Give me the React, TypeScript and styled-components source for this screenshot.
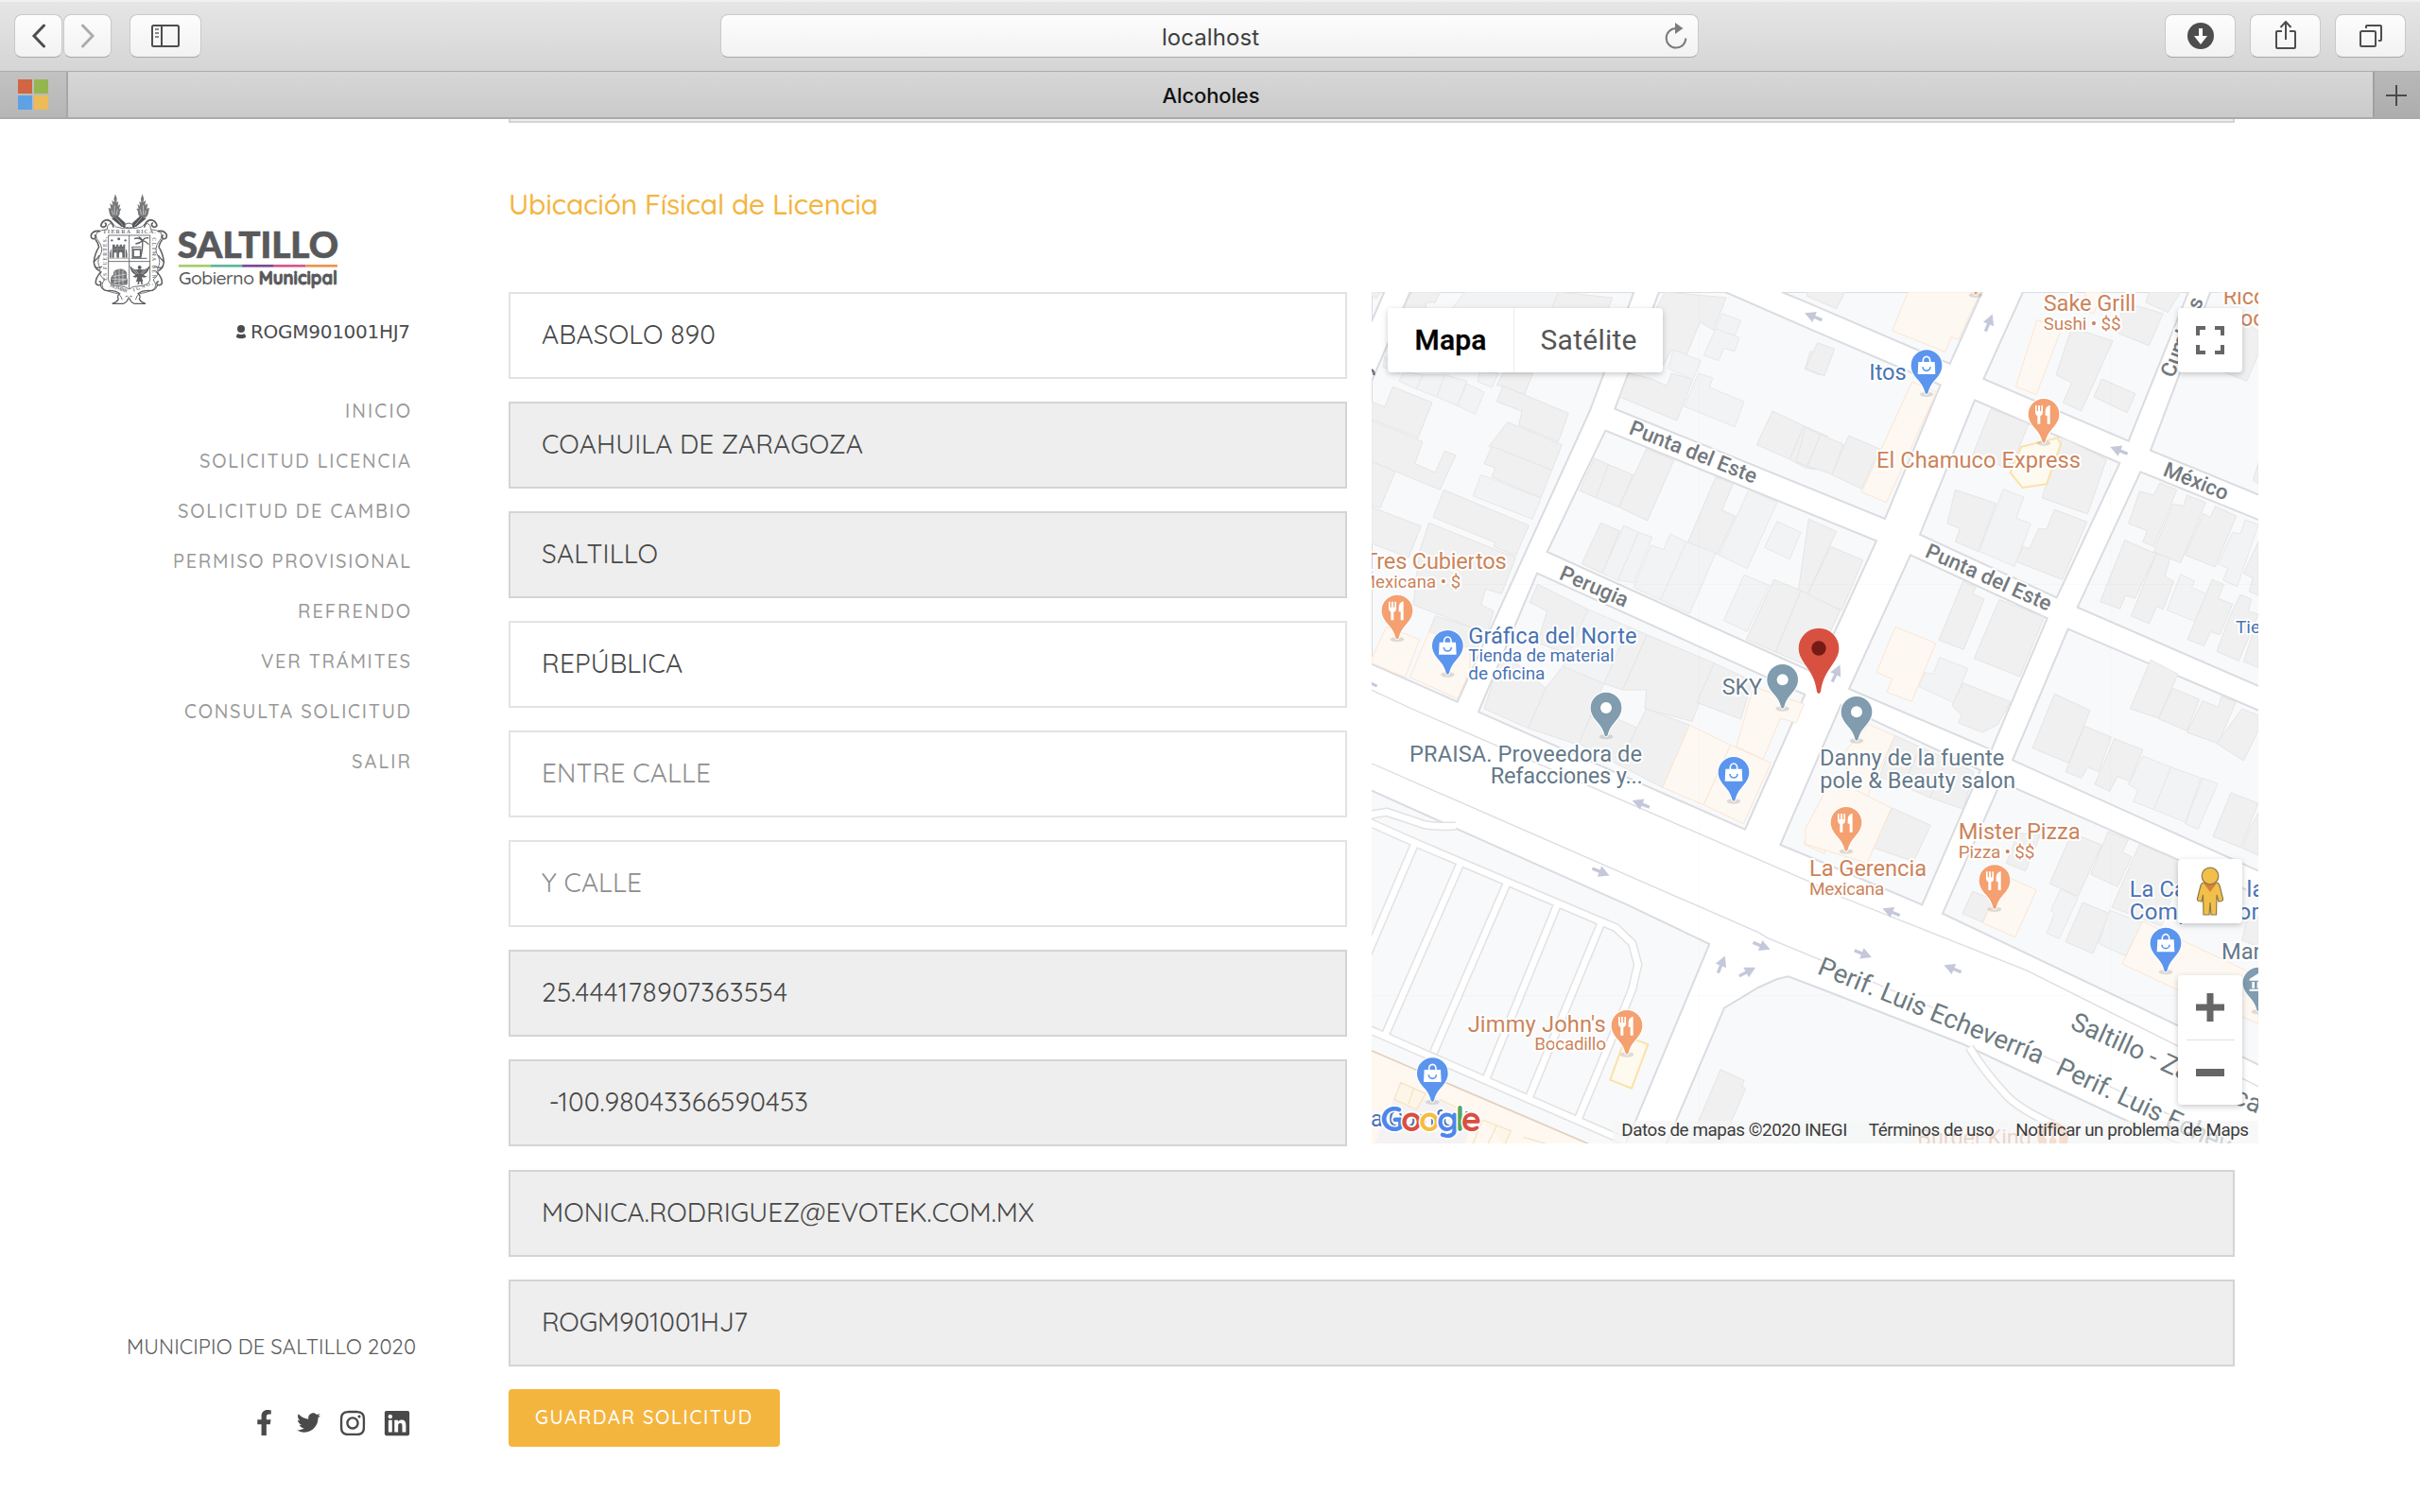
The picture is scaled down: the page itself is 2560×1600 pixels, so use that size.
import React, { useLayoutEffect, useRef, useState } from "react";
import styled, { createGlobalStyle, css } from "styled-components";
import { FaFacebookF, FaInstagram, FaLinkedin, FaTwitter } from "react-icons/fa";

const sans = `"Quicksand", Lato, "Open Sans", sans-serif`;
const mapFont = `Roboto, "Liberation Sans", sans-serif`;
const chromeFont = `Inter, "Liberation Sans", sans-serif`;

const GlobalStyle = createGlobalStyle`
  * { box-sizing: border-box; }
  body { margin: 0; background: #fff; font-family: ${sans}; }
`;

/* ---------- text with a fixed measure ---------- */

const Run = styled.span`
  display: inline-block;
  white-space: pre;
`;

function Measured({ text, width }: { text: string; width: number }) {
  const ref = useRef<HTMLSpanElement>(null);
  const [spacing, setSpacing] = useState(0);
  useLayoutEffect(() => {
    if (!ref.current) return;
    const natural = ref.current.getBoundingClientRect().width;
    setSpacing((width - natural) / (text.length - 1));
  }, [text, width]);
  return (
    <Run ref={ref} style={{ letterSpacing: spacing, marginRight: -spacing }}>
      {text}
    </Run>
  );
}

/* ---------- browser chrome ---------- */

const Window = styled.div`
  width: 2560px;
  height: 1600px;
  display: flex;
  flex-direction: column;
  overflow: hidden;
  background: #fff;
`;

const Toolbar = styled.header`
  flex: none;
  height: 76px;
  padding: 15px 15px 0;
  display: grid;
  grid-template-columns: 747px 1035px 1fr;
  align-items: start;
  background: linear-gradient(#e6e6e6, #d5d5d5);
  border-top: 0;
  border-bottom: 1px solid #acacac;
  box-shadow: inset 0 2px 0 #f1f1f1;
`;

const ButtonGroup = styled.div<{ $end?: boolean }>`
  display: flex;
  gap: ${(p) => (p.$end ? 15 : 1)}px;
  justify-content: ${(p) => (p.$end ? "flex-end" : "flex-start")};
`;

const ToolButton = styled.button<{ $width: number; $apart?: boolean }>`
  width: ${(p) => p.$width}px;
  height: 46px;
  margin: 0 0 0 ${(p) => (p.$apart ? 18 : 0)}px;
  padding: 0;
  border: 1px solid #c9c9c9;
  border-bottom-color: #a8a8a8;
  border-radius: 8px;
  background: linear-gradient(#fdfdfd, #f2f2f2);
  display: flex;
  align-items: center;
  justify-content: center;
  svg { display: block; }
`;

const AddressBar = styled.div`
  height: 46px;
  border: 1px solid #c9c9c9;
  border-bottom-color: #a8a8a8;
  border-radius: 8px;
  background: linear-gradient(#fdfdfd, #f2f2f2);
  display: grid;
  grid-template-columns: 1fr 120px 1fr;
  align-items: center;
  justify-items: center;
  font: 400 24px/30px ${chromeFont};
  color: #3f3f3f;
  padding: 1px 10px 0 12px;
  svg { grid-column: 3; justify-self: end; }
  span { grid-column: 2; padding-top: 2px; }
`;

const TabStrip = styled.div`
  flex: none;
  height: 50px;
  display: grid;
  grid-template-columns: 72px 1fr 50px;
  border-bottom: 2px solid #ababab;
`;

const PinnedTab = styled.div`
  background: linear-gradient(#c2c2c2, #b6b6b6);
  border-right: 2px solid #a7a7a7;
  display: flex;
  align-items: center;
  justify-content: center;
`;

const WindowsMark = styled.div`
  display: grid;
  grid-template-columns: 15px 15px;
  grid-auto-rows: 15px;
  gap: 2px;
`;

const Square = styled.i<{ $color: string }>`
  background: ${(p) => p.$color};
`;

const ActiveTab = styled.div`
  background: linear-gradient(#d7d7d7, #cacaca);
  display: flex;
  align-items: center;
  justify-content: center;
  font: 500 22px/28px ${chromeFont};
  color: #111;
  padding: 1px 20px 0 0;
`;

const NewTab = styled.div`
  background: linear-gradient(#b8b8b8, #adadad);
  border-left: 2px solid #a0a0a0;
  display: flex;
  align-items: center;
  justify-content: center;
  padding: 2px 2px 0 0;
`;

/* ---------- page ---------- */

const Page = styled.div`
  flex: 1;
  display: flex;
  min-height: 0;
`;

const Sidebar = styled.aside`
  width: 538px;
  padding: 77px 104px 79px 95px;
  display: flex;
  flex-direction: column;
`;

const User = styled.div`
  margin-top: 16px;
  height: 24px;
  display: flex;
  justify-content: flex-end;
  align-items: center;
  gap: 5px;
  font: 400 20px/24px "DejaVu Sans", sans-serif;
  color: #4c4c4c;
`;

const Menu = styled.nav`
  margin-top: 45px;
  display: flex;
  flex-direction: column;
  align-items: flex-end;
`;

const MenuItem = styled.a`
  height: 53px;
  font: 500 20px/53px ${sans};
  color: #999;
`;

const SideFooter = styled.footer`
  margin-top: auto;
  display: flex;
  flex-direction: column;
  align-items: flex-end;
`;

const Copyright = styled.div`
  height: 28px;
  margin-right: -6px;
  font: 400 22px/28px ${sans};
  color: #5c5c5c;
`;

const Social = styled.div`
  margin-top: 51px;
  height: 31px;
  display: grid;
  grid-template-columns: repeat(4, 46.7px);
  justify-items: center;
  align-items: center;
  margin-right: -9px;
  color: #4a4a4a;
`;

const Main = styled.main`
  width: 1851px;
  display: flex;
  flex-direction: column;
  align-items: flex-start;
`;

const CutField = styled.div`
  width: 1826px;
  height: 4px;
  background: #eee;
  border: solid #d4d4d4;
  border-width: 0 2px 2px;
`;

const Title = styled.h2`
  margin: 68px 0 75px;
  height: 36px;
  font: 500 30px/36px ${sans};
  color: #f4b53f;
`;

const Split = styled.div`
  display: flex;
  gap: 26px;
  margin-bottom: 25px;
`;

const FieldColumn = styled.div<{ $width: number }>`
  width: ${(p) => p.$width}px;
  display: flex;
  flex-direction: column;
  gap: 24px;
`;

const FieldBox = styled.div<{ $locked?: boolean; $empty?: boolean }>`
  height: 92px;
  padding: 0 33px 2px;
  display: flex;
  align-items: center;
  font: 400 28px/34px ${sans};
  background: #fff;
  border: 2px solid #e3e3e3;
  color: ${(p) => (p.$empty ? "#8e8e8e" : "#484848")};
  ${(p) =>
    p.$locked &&
    css`
      background: #eee;
      border-color: #d4d4d4;
    `}
`;

const Submit = styled.button`
  margin-top: 24px;
  width: 287px;
  height: 61px;
  border: 0;
  padding: 0 2px 1px 0;
  border-radius: 4px;
  background: #f4b53f;
  color: #fff;
  font: 500 20px/28px ${sans};
`;

/* ---------- map ---------- */

const MapFrame = styled.section`
  position: relative;
  width: 938px;
  height: 901px;
  overflow: hidden;
  font-family: ${mapFont};
  > svg { display: block; }
`;

const Control = styled.div<{ $top: number; $height: number }>`
  position: absolute;
  right: 17px;
  top: ${(p) => p.$top}px;
  width: 68px;
  height: ${(p) => p.$height}px;
  background: #fff;
  border-radius: 4px;
  box-shadow: 0 2px 6px rgba(0, 0, 0, 0.22);
  display: flex;
  flex-direction: column;
  align-items: center;
  justify-content: center;
`;

const ZoomHalf = styled.div`
  flex: 1;
  width: 51px;
  display: flex;
  align-items: center;
  justify-content: center;
  & + & { border-top: 1px solid #e0e0e0; }
`;

const TypeSwitch = styled.div`
  position: absolute;
  left: 17px;
  top: 17px;
  height: 68px;
  display: grid;
  grid-template-columns: 133px 158px;
  background: #fff;
  border-radius: 4px;
  box-shadow: 0 2px 6px rgba(0, 0, 0, 0.22);
`;

const TypeOption = styled.div<{ $active?: boolean }>`
  display: flex;
  align-items: center;
  justify-content: center;
  font-size: 30px;
  line-height: 36px;
  padding-bottom: 1px;
  font-weight: ${(p) => (p.$active ? 500 : 400)};
  color: ${(p) => (p.$active ? "#000" : "#565656")};
  -webkit-text-stroke: ${(p) => (p.$active ? "0.4px #000" : "0")};
  & + & { border-left: 1px solid #ececec; }
`;

const Attribution = styled.div`
  position: absolute;
  right: 0;
  bottom: 0;
  height: 24px;
  padding: 0 10px 4px 9px;
  display: flex;
  align-items: center;
  gap: 22.5px;
  background: rgba(245, 245, 245, 0.72);
  font-size: 18.8px;
  line-height: 20px;
  color: #3c3c3c;
`;

const Label = styled.text<{ $size: number; $fill: string; $weight?: number }>`
  font-family: ${mapFont};
  font-size: ${(p) => p.$size}px;
  font-weight: ${(p) => p.$weight ?? 400};
  fill: ${(p) => p.$fill};
  stroke: #fff;
  stroke-width: 12px;
  stroke-linejoin: round;
  paint-order: stroke;
`;

/* Map geometry: one unit is a third of a pixel. East half starts at x=1410, south half at y=1350. */

const blocks = [
  "33,27 73,27 33,120",
  "155,27 865,27 770,285 725,405 305,1328 33,1208 33,310",
  "945,27 1155,27 1440,152 1838,322 1662,747 805,398",
  "1335,27 1410,58 1868,255 1970,27",
  "2100,27 1975,303 2435,500 2625,27",
  "2695,27 2505,530 2857,674 2857,20",
  "1947,370 2407,570 2207,997 1773,797",
  "2473,598 2857,754 2857,1282 2273,1028",
  "775,467 1635,817 1442,1238 590,852",
  "1743,862 2177,1063 2000,1480 1548,1287",
  "2243,1097 2857,1359 2857,1869 2067,1513",
  "1522,1338 1965,1545 1780,1972 1410,1815 1330,1782",
  "2030,1582 2857,1946 2857,2485 2590,2355 1845,2000",
  "558,920 1408,1305 1218,1733 372,1360",
  "20,1604 300,1730 850,1975 1105,2097 870,2660 830,2750 20,2750",
  "1355,2200 1320,2208 1260,2235 1152,2300 960,2750 2640,2750 2390,2640 1910,2415 1440,2232",
];

type Zone = { x: number; y: number; grey: string[]; pale: string[]; warm: string[] };

const zones: Zone[] = [
  {
    x: 0,
    y: 0,
    grey: [
      "160,27 250,27 235,60 208,60 200,90 130,90",
      "33,27 60,27 48,48 33,40",
      "625,27 797,45 780,90 600,90",
      "965,27 1158,45 1118,148 1075,122 1033,225 985,210 955,265 930,90",
      "850,285 915,300 970,325 985,285 1052,305 1002,435 820,360",
      "1305,405 1405,452 1360,558 1255,512",
      "1405,452 1480,485 1440,590 1410,585 1360,558",
      "1425,215 1470,235 1455,290 1408,272",
      "100,328 225,378 180,490 33,430 33,375 75,392",
      "33,435 195,502 170,572 235,600 265,532 300,545 250,655 33,565",
      "33,565 108,597 60,712 33,705",
      "33,710 190,770 150,870 33,825",
      "262,655 532,768 490,865 420,835 425,822 228,742",
      "215,760 490,870 445,985 395,970 380,1020 420,1040 400,1110 165,1020 185,850",
      "235,1055 405,1110 350,1180 215,1105",
      "450,285 545,285 518,352 430,322",
      "450,325 658,412 625,502 500,450 510,405 430,375",
      "465,440 637,512 605,592 405,517",
      "415,517 605,592 570,680 415,615 425,585 390,572",
      "740,555 785,575 745,680 693,658",
      "785,575 862,607 818,710 745,680",
      "905,525 992,562 908,753 818,710",
      "760,760 820,785 765,920 700,890",
      "1125,615 1180,635 1145,720 1187,738 1130,860 1037,820",
      "1420,748 1508,787 1410,1000 1385,990",
      "1490,835 1592,878 1525,1037 1415,990",
      "1310,940 1395,975 1315,1170 1222,1130",
      "1395,975 1520,1037 1435,1222 1315,1170",
      "560,955 720,1035 660,1180 560,1140 590,1040 535,1012",
      "450,1170 585,1285 530,1412 390,1350",
      "585,1285 640,1215 770,1270 690,1465 530,1412",
      "850,1090 907,1115 830,1290 770,1270",
      "907,1115 1120,1205 1050,1390 900,1350 905,1290 830,1290",
      "1120,1205 1240,1262 1205,1383 1065,1330",
    ],
    pale: [
      "330,27 625,27 600,90 280,90",
      "75,230 120,285 70,265",
      "135,280 195,290 175,335 120,310",
      "195,290 265,290 240,360 175,335",
      "265,290 335,310 305,388 240,360",
      "335,318 390,345 362,415 305,388",
      "375,280 435,285 415,330 370,312",
      "1145,95 1205,118 1185,165 1125,145",
      "1125,143 1200,172 1185,215 1150,205 1135,245 1087,228",
      "990,210 1078,245 1052,305 975,270",
      "1070,285 1115,300 1105,330 1215,375 1185,455 1025,390",
      "380,607 570,682 543,748 355,675",
      "833,768 880,790 815,942 765,920",
      "880,790 923,805 865,950 815,942",
      "920,830 960,845 980,795 1032,820 950,1005 865,965",
      "1032,820 1125,855 1042,1048 950,1005",
      "1230,655 1320,695 1225,905 1135,862",
      "1320,755 1395,790 1360,875 1280,838",
      "1215,925 1295,958 1225,1105 1150,1070",
      "720,1035 850,1090 770,1270 640,1215",
    ],
    warm: ["80,1090 185,1130 140,1250 33,1205 33,1190", "215,1105 345,1160 345,1230 305,1318 155,1250"],
  },
  {
    x: 1410,
    y: 0,
    grey: [
      "5,27 125,27 98,80 5,40",
      "38,188 92,208 60,293 0,270",
      "845,140 975,182 875,405 817,378 845,315 795,290",
      "940,303 1047,350 1020,410 915,360",
      "1010,60 1135,95 1090,197 985,155",
      "1090,27 1190,27 1150,92 1080,60",
      "1390,120 1437,150 1437,225 1400,310 1325,280",
      "1437,570 1437,635 1420,625",
      "0,458 48,480 5,580 -30,565",
      "48,480 120,510 85,605 5,580",
      "137,483 235,525 178,652 83,607",
      "588,398 708,445 650,590 530,545",
      "815,490 955,558 895,732 750,680",
      "475,655 605,698 548,850 475,820 490,778 450,762",
      "790,717 893,757 815,940 668,883 690,835 710,842 740,778 765,780",
      "1125,633 1178,655 1105,835 1070,820 1085,785 1025,762 1060,660 1105,672",
      "1210,672 1270,695 1190,887 1105,852 1165,700 1200,707",
      "1300,707 1367,738 1300,900 1205,862 1262,730 1285,742",
      "1437,820 1437,990 1408,978 1420,935 1390,920",
      "1013,815 1113,858 1045,1000 1015,990 998,1033 935,1010",
      "1113,858 1157,872 1140,930 1168,945 1135,1035 1115,1025 1090,1080 1033,1055",
      "1290,940 1327,955 1310,1000 1355,1018 1315,1115 1285,1105 1265,1150 1212,1130 1250,1040",
      "1380,988 1415,1002 1405,1040 1437,1050 1375,1198 1305,1168 1345,1060",
      "1420,1110 1437,1115 1437,1220 1390,1200",
      "500,945 540,965 530,985 567,1002 502,1162 423,1132",
      "615,1003 757,1060 680,1248 535,1190",
      "500,1268 650,1328 610,1400 562,1425 485,1395 495,1370 465,1340",
      "1095,1195 1182,1240 1120,1380 1030,1350",
      "1165,1285 1250,1320 1210,1420 1120,1382",
      "1260,1325 1310,1345 1320,1310 1365,1330 1310,1460 1210,1425",
      "790,1303 903,1355 835,1522 720,1475",
      "1385,1350 1437,1370 1437,1420 1390,1515 1305,1460",
    ],
    pale: [
      "628,653 693,678 668,745 715,762 663,898 550,850",
      "1395,750 1437,765 1370,962 1325,942 1340,905 1310,890 1355,790 1380,795",
      "1190,923 1235,945 1225,965 1272,985 1235,1072 1147,1037",
      "425,1187 515,1222 470,1330 360,1280 378,1235 405,1240",
    ],
    warm: [
      "325,27 555,27 485,178 463,170 443,217 275,150",
      "338,312 415,345 257,695 178,662",
      "735,115 810,150 732,353 667,327",
      "890,27 940,27 915,97 880,80",
      "285,1090 413,1142 337,1327 258,1297 275,1255 225,1235",
    ],
  },
  {
    x: 0,
    y: 1350,
    grey: [
      "740,0 875,60 820,180 690,110",
      "905,0 1042,52 957,250 820,180 875,60",
      "1140,1145 1215,1180 1208,1200 1220,1205 1145,1380 1040,1380",
    ],
    pale: [],
    warm: [
      "1042,52 1172,115 1087,305 957,250",
      "1172,115 1300,172 1213,365 1087,305",
      "1245,-70 1405,-15 1380,45 1330,30 1275,160 1190,120",
      "1440,350 1480,360 1470,460 1405,430",
    ],
  },
  {
    x: 1410,
    y: 1350,
    grey: [
      "283,85 365,122 310,245 235,215",
      "365,122 450,160 395,282 310,245",
      "450,160 535,200 500,318 395,282",
      "275,315 397,370 343,485 213,440",
      "675,395 745,400 698,515 637,490",
      "530,580 595,605 562,678 498,650",
      "885,55 970,90 930,200 895,185 875,220 825,200",
      "980,95 1070,130 1030,230 990,215 965,262 918,240",
      "1350,267 1437,300 1380,440 1293,405",
      "1437,330 1437,465 1385,442 1410,380",
      "845,395 940,432 865,595 775,555",
      "960,390 1025,415 1005,455 1035,470 990,565 905,525",
      "1060,430 1200,490 1130,690 972,630",
      "880,615 965,650 912,777 825,740",
      "1400,670 1437,660 1437,755 1385,735",
    ],
    pale: [
      "1070,150 1160,185 1105,320 1040,295 1055,258 1025,240",
      "1160,185 1255,220 1205,360 1105,320",
      "1260,220 1308,238 1245,383 1205,365",
      "810,572 865,600 805,730 765,712 790,650 778,640",
      "965,640 1070,680 1015,785 930,745",
    ],
    warm: [
      "200,50 283,85 195,280 130,250 130,130",
      "85,220 272,315 195,490 0,430 0,380",
      "630,530 733,575 665,725 562,680",
      "1070,675 1437,850 1437,1000 1182,893 1005,810",
    ],
  },
];

const arrows: [number, number, number][] = [
  [1435, 105, 202],
  [1992, 125, -68],
  [2405, 530, 202],
  [1507, 1238, -65],
  [888, 1652, 202],
  [760, 1868, 22],
  [1270, 2103, 22],
  [1143, 2162, -68],
  [1225, 2185, -28],
  [1682, 1995, 202],
  [1592, 2128, 22],
  [1877, 2175, 202],
];

type PinKind = "food" | "shop" | "place" | "bank";
const pinColor: Record<PinKind, string> = { food: "#f4a070", shop: "#5b95ee", place: "#809cae", bank: "#809cae" };

const pins: [PinKind, number, number][] = [
  ["food", 114, 1038],
  ["shop", 274, 1150],
  ["place", 1337, 1258],
  ["place", 777, 1347],
  ["shop", 1794, 260],
  ["food", 2166, 415],
  ["place", 1572, 1360],
  ["shop", 1182, 1552],
  ["food", 843, 2356],
  ["shop", 226, 2507],
  ["food", 1539, 1711],
  ["food", 2010, 1895],
  ["shop", 2553, 2094],
  ["bank", 2847, 2220],
  ["food", 2195, 2710],
  ["food", 1950, -55],
];

function Pin({ kind, x, y }: { kind: PinKind; x: number; y: number }) {
  return (
    <g transform={`translate(${x} ${y})`}>
      <ellipse cx="0" cy="92" rx="22" ry="8" fill="#000" opacity=".12" />
      <path
        d="M0-49A49 49 0 0 1 49 0C49 20 38 33 26 47C14 61 8 72 5 86Q0 96-5 86C-8 72-14 61-26 47C-38 33-49 20-49 0A49 49 0 0 1 0-49Z"
        fill={pinColor[kind]}
        stroke="#fff"
        strokeWidth="6"
        paintOrder="stroke"
      />
      {kind === "place" && <circle r="18" fill="#fff" />}
      {kind === "food" && (
        <g fill="#fff">
          <path d="M-27-28h5v18h4v-18h6v18h4v-18h5v22q0 9-8 11v26h-9V5q-7-2-7-11z" />
          <path d="M20-29v60h-9V4H5v-14q1-17 15-19z" />
        </g>
      )}
      {kind === "shop" && (
        <g>
          <path d="M-26-11h52l2 39h-56z" fill="#fff" />
          <path d="M-11-9v-6a11 13 0 0 1 22 0v6" fill="none" stroke="#fff" strokeWidth="5" />
          <path d="M-12 5a12 12 0 0 0 24 0" fill="none" stroke="#5b95ee" strokeWidth="5" />
        </g>
      )}
      {kind === "bank" && <path d="M-28-12L0-30L28-12v5h-56zM-20-3h8v20h-8zM-4-3h8v20h-8zM-28 20h56v6h-56z" fill="#fff" />}
    </g>
  );
}

const orange = "#cc835a";
const blue = "#4a73b3";
const slate = "#64798a";
const road = "#74797e";
const highway = "#6c7a80";

type LabelRow = [string, number, number, number | null, number, string, number?, number?];

/* text, x, baseline, length, size, colour, angle, weight */
const labels: LabelRow[] = [
  ["Tres Cubiertos", 10, 907, 451, 71, orange],
  ["Mexicana • $", -4, 966, 320, 56, orange],
  ["Gráfica del Norte", 340, 1143, 535, 71, blue],
  ["Tienda de material", 340, 1201, 463, 57, blue],
  ["de oficina", 340, 1257, 243, 57, blue],
  ["SKY", 1145, 1304, 127, 70, slate],
  ["Punta del Este", 846, 476, 430, 67, road, 21.8, 500],
  ["Perugia", 625, 937, 230, 67, road, 23.5, 500],
  ["Itos", 1612, 306, 118, 71, blue],
  ["El Chamuco Express", 1635, 585, 648, 71, orange],
  ["Sake Grill", 2165, 87, 293, 71, orange],
  ["Sushi • $$", 2165, 147, 246, 57, orange],
  ["Rico", 2735, 65, null, 70, orange],
  ["Food", 2752, 135, null, 70, orange],
  ["México", 2541, 608, 216, 67, road, 22, 500],
  ["Punta del Este", 1786, 866, 430, 67, road, 24, 500],
  ["Cumbres", 2578, 302, 266, 67, road, -69, 500],
  ["Tienda", 2775, 1110, null, 57, blue],
  ["PRAISA. Proveedora de", 153, 1517, 738, 71, slate],
  ["Refacciones y...", 410, 1588, 483, 71, slate],
  ["Jimmy John's", 338, 2376, 438, 71, orange],
  ["Bocadillo", 550, 2434, 227, 57, orange],
  ["La Gerencia", 1422, 1880, 372, 71, orange],
  ["Mexicana", 1422, 1941, 238, 57, orange],
  ["Mister Pizza", 1895, 1764, 387, 71, orange],
  ["Pizza • $$", 1895, 1823, 242, 57, orange],
  ["Danny de la fuente", 1455, 1530, 586, 71, slate],
  ["pole & Beauty salon", 1456, 1601, 620, 71, slate],
  ["La Casa de la", 2438, 1948, 428, 71, blue],
  ["Computadora", 2438, 2018, 450, 72, blue],
  ["Mart", 2730, 2145, null, 71, slate],
  ["Perif. Luis Echeverría", 1444, 2190, 766, 83, highway, 22.2],
  ["Perif. Luis Echeverría", 2200, 2508, 766, 83, highway, 25.2],
  ["Saltillo - Zacatecas", 2246, 2364, 700, 83, highway, 24.5],
  ["La Comfort", -8, 2675, 355, 70, blue],
  ["Burger King", 1765, 2735, 362, 71, orange],
];

const aisles = [
  "M20 1708L170 1775L760 2025L808 2045L860 2095L878 2162L860 2240L840 2290L685 2660",
  "M170 1778L-10 2200",
  "M315 1840L75 2388",
  "M463 1902L230 2440",
  "M625 1965L395 2528",
  "M762 2028L530 2590",
  "M20 2366L75 2390L840 2724",
  "M20 1688L82 1678L200 1718Q250 1726 300 1722",
];

function StreetMap() {
  return (
    <svg width="938" height="901" viewBox="33 27 2814 2703">
      <rect x="33" y="27" width="2814" height="2703" fill="#fff" />
      {blocks.map((p) => (
        <polygon key={p} points={p} fill="#f8f9fb" stroke="#dadce0" strokeWidth="6" />
      ))}
      <polygon points="20,2430 730,2735 20,2750" fill="#fef8f1" />
      <polygon points="100,2590 250,2590 350,2660 330,2735 40,2735" fill="#f5f2f4" />
      <path d="M20 2430L730 2735" stroke="#e2cfbd" strokeWidth="5" />
      <path
        d="M125 2537L205 2572L175 2622L105 2590ZM167 2555L150 2605M250 2590L350 2640M385 2655L475 2690L455 2735M385 2655L355 2730M430 2672L400 2735M515 2710L600 2735"
        fill="#fdf6e8"
        stroke="#f6e3c4"
        strokeWidth="4"
      />
      {[
        ["#e2e2e2", 29],
        ["#fff", 20],
      ].map(([color, width]) => (
        <g key={color} fill="none" stroke={color} strokeWidth={width} strokeLinejoin="round">
          {aisles.map((d) => (
            <path key={d} d={d} />
          ))}
          <path d="M1930 2425Q1975 2500 2050 2580Q2100 2630 2240 2690" />
        </g>
      ))}
      <path
        d="M20 1285L160 1350L1420 1898L1530 1950L2110 2180L2590 2420L2860 2556M20 1518L1260 2060L1290 2078L1440 2140L1770 2280L2250 2490L2760 2730"
        fill="none"
        stroke="#dcdce2"
        strokeWidth="4"
      />
      {zones.map((z) => (
        <g key={`${z.x}-${z.y}`} transform={`translate(${z.x} ${z.y})`} strokeWidth="3">
          {z.grey.map((p) => (
            <polygon key={p} points={p} fill="#f0f0f0" stroke="#e5e5e5" />
          ))}
          {z.pale.map((p) => (
            <polygon key={p} points={p} fill="#f1f3f5" stroke="#e6e8eb" />
          ))}
          {z.warm.map((p) => (
            <polygon key={p} points={p} fill="#fef8f2" stroke="#fae6d3" />
          ))}
        </g>
      ))}
      <g fill="#fffaf0" stroke="#fae2a8" strokeWidth="6">
        <polygon points="2095,518 2210,490 2220,510 2175,637 2098,648 2060,600" />
        <polygon points="840,2390 910,2415 858,2555 790,2528" />
      </g>
      <path d="M1073 27V2730M2377 27V2730M33 955H2847M33 2260H2847" stroke="#000" strokeOpacity=".03" strokeWidth="2" />
      {arrows.map(([x, y, a]) => (
        <path key={`${x},${y}`} transform={`translate(${x} ${y}) rotate(${a})`} d="M-29-5H-4V-18L30 0L-4 18V5H-29Z" fill="#c5c8da" />
      ))}
      <path d="M33 1265L52 1274L48 1282L33 1275Z" fill="#c5c8da" />
      <path d="M30 273q12 4 10 18" stroke={road} strokeWidth="8" fill="none" />
      {labels.map(([text, x, y, len, size, fill, angle, weight]) => (
        <Label
          key={`${text}${x}`}
          transform={`translate(${x} ${y}) rotate(${angle ?? 0})`}
          textLength={len ?? undefined}
          $size={size}
          $fill={fill}
          $weight={weight}
        >
          {text}
        </Label>
      ))}
      {pins.map(([kind, x, y]) => (
        <Pin key={`${x},${y}`} kind={kind} x={x} y={y} />
      ))}
      <g transform="translate(1452 1158)">
        <path
          d="M0-64A64 64 0 0 1 64 0C64 24 50 42 36 62C18 88 10 108 6 138Q0 150-6 138C-10 108-18 88-36 62C-50 42-64 24-64 0A64 64 0 0 1 0-64Z"
          fill="#d85140"
          stroke="#fff"
          strokeOpacity=".6"
          strokeWidth="4"
          paintOrder="stroke"
        />
        <circle r="23" fill="#731b14" />
      </g>
      <text
        x="61"
        y="2690"
        textLength="320"
        fontFamily="Quicksand, Lato, sans-serif"
        fontSize="108"
        fontWeight="700"
        stroke="#fff"
        strokeWidth="10"
        strokeLinejoin="round"
        paintOrder="stroke"
      >
        <tspan fill="#4e86ec">G</tspan>
        <tspan fill="#da4f40">o</tspan>
        <tspan fill="#f3bd42">o</tspan>
        <tspan fill="#4e86ec">g</tspan>
        <tspan fill="#58a65c">l</tspan>
        <tspan fill="#da4f40">e</tspan>
      </text>
    </svg>
  );
}

/* ---------- brand ---------- */

function Torch() {
  return (
    <g>
      <path
        d="M126 46L121 62L124 72L115 66L118 82L109 76L112 92L104 90L107 106Q108 116 117 122L130 120Q142 114 140 102L145 92L138 92L142 78L134 84L136 68L130 74L131 60Z"
        fill="#77787a"
      />
      <path d="M124 82Q122 98 124 112M115 98L119 112M133 94L130 112" stroke="#fff" strokeWidth="1.6" fill="none" />
      <path d="M114 124L134 116L158 138L158 150L146 150Z" fill="#55565a" />
      <path d="M128 120L150 146" stroke="#fff" strokeWidth="1.4" />
    </g>
  );
}

function Frame() {
  return (
    <g fill="none" stroke="#5c5d60" strokeWidth="2.6">
      <path d="M168 152Q148 158 128 150Q120 138 108 140Q98 146 100 158Q80 160 68 168Q60 182 72 194Q92 220 76 244Q66 262 78 282Q72 304 92 318Q76 336 92 350Q116 360 134 362Q144 366 148 382" />
      <path d="M120 152Q118 132 100 128Q84 130 80 146Q88 156 96 146Q98 138 92 138" strokeWidth="5" />
      <path d="M78 164Q56 160 49 176Q48 190 60 188Q68 180 60 176" strokeWidth="5" />
      <path d="M62 190Q72 200 74 214Q60 236 58 262Q60 282 76 290" strokeWidth="4.5" />
      <path d="M57 262Q70 250 76 240M60 276Q70 284 84 276" strokeWidth="4" />
      <path d="M82 292Q62 312 64 330Q72 340 80 332Q82 322 74 324" strokeWidth="4.5" />
      <path d="M78 334Q86 356 104 352M104 352Q128 352 140 362Q130 368 136 380Q130 390 116 394H152Q164 388 168 376" strokeWidth="3.6" />
      <path d="M158 372Q164 366 168 374" />
    </g>
  );
}

function Crest() {
  return (
    <g>
      <Torch />
      <g transform="translate(338 0) scale(-1 1)">
        <Torch />
      </g>
      <path d="M158 142Q169 134 180 142M150 150Q169 160 188 150" stroke="#5c5d60" strokeWidth="3" fill="none" />
      <Frame />
      <g transform="translate(338 0) scale(-1 1)">
        <Frame />
      </g>
      <path
        d="M104 177H236V318Q232 338 200 338Q180 338 170 348Q158 338 138 338Q106 338 104 318Z"
        fill="#fff"
        stroke="#5c5d60"
        strokeWidth="2.6"
      />
      <path d="M170 177V346M104 260H236" stroke="#5c5d60" strokeWidth="2.6" />
      {/* castle */}
      <g fill="#6a6b6d">
        <path d="M117 206h8v6h4v-6h7v6h4v-6h7v6h4v-6h6v42h-9v-14q-5-8-10 0v14h-8v-14q-4-6-8 0v14h-7z" />
        <circle cx="115" cy="193" r="3.5" />
        <circle cx="137" cy="188" r="4.5" />
        <circle cx="158" cy="193" r="3.5" />
        <path d="M108 248q-1-20 5-28v28zM164 248q1-20-5-28v28z" />
      </g>
      <path d="M106 250H168M120 220H156M132 210V246" stroke="#8b8c8e" strokeWidth="2" />
      {/* palm and well */}
      <g stroke="#606164" strokeWidth="3" fill="none">
        <path d="M186 188Q200 182 212 194Q220 182 232 186M212 194Q204 202 190 204M212 194Q224 196 232 206M212 194Q208 184 200 182" strokeWidth="4" />
        <path d="M212 194Q214 222 206 246" strokeWidth="4" />
        <rect x="183" y="222" width="23" height="24" strokeWidth="5" />
        <path d="M178 214H208M180 214V248M176 250H226" />
      </g>
      {/* lion */}
      <path d="M112 330Q108 306 120 302Q118 288 132 286Q146 280 156 288Q166 294 162 308Q168 322 164 334Q140 338 112 330Z" fill="#77787a" />
      <path d="M118 308L160 300M116 316H162M120 326L160 318M126 292V330M138 286V334M150 288V332" stroke="#fff" strokeWidth="1.6" />
      {/* eagle */}
      <g fill="#606164">
        <path d="M203 284Q184 290 172 272Q174 296 190 302Q184 308 180 306Q186 314 196 310L192 324H214L210 310Q222 314 228 306Q222 308 216 302Q232 296 236 272Q222 290 203 284Z" />
        <circle cx="203" cy="279" r="6" />
        <path d="M198 322h4v10h-6zM206 322h4l4 10h-6z" />
      </g>
      <path d="M180 284L194 300M188 286L200 300M226 284L212 300M218 286L206 300" stroke="#fff" strokeWidth="1.4" />
      <g fontFamily="Liberation Serif, serif" fontSize="18" fontWeight="700" fill="#77787a">
        <text x="86" y="172" textLength="88">TIERRA</text>
        <text x="192" y="172" textLength="62">RICA.</text>
        <text transform="translate(98 320) rotate(-90)" textLength="138" fontSize="16">ES FUERTES,</text>
        <text transform="translate(243 184) rotate(90)" textLength="140" fontSize="16">CLIMA BEN-</text>
        <text transform="translate(108 340) rotate(20)" textLength="58" fontSize="16">HOMBR</text>
        <text transform="translate(184 356) rotate(-20)" textLength="66" fontSize="16">IGNO,</text>
      </g>
    </g>
  );
}

const stripe = ["#a9cc6b", "#5fb89a", "#7d4a95", "#d9568c", "#ec9450"];

function Brand() {
  return (
    <svg width="264" height="120" viewBox="45 39 792 360">
      <Crest />
      <g fontFamily="Lato, sans-serif" fill="#58595b">
        <text x="323" y="249" textLength="511" lengthAdjust="spacingAndGlyphs" fontSize="116" fontWeight="900" stroke="#58595b" strokeWidth="2">
          SALTILLO
        </text>
        <text x="327" y="334" textLength="240" fontSize="58" fontFamily="Quicksand, Lato, sans-serif" fontWeight="500">
          Gobierno
        </text>
        <text x="581" y="334" textLength="250" lengthAdjust="spacingAndGlyphs" fontSize="58" fontFamily="Quicksand, Lato, sans-serif" fontWeight="700" stroke="#58595b" strokeWidth="2.5">
          Municipal
        </text>
      </g>
      {stripe.map((c, i) => (
        <rect key={c} x={327 + i * 100.7} y="270" width="101" height="8" fill={c} />
      ))}
    </svg>
  );
}

/* ---------- data ---------- */

type FieldData = { text: string; width: number; locked?: boolean; empty?: boolean };

const locationFields: FieldData[] = [
  { text: "ABASOLO 890", width: 184 },
  { text: "COAHUILA DE ZARAGOZA", width: 340, locked: true },
  { text: "SALTILLO", width: 123, locked: true },
  { text: "REPÚBLICA", width: 149 },
  { text: "ENTRE CALLE", width: 179, empty: true },
  { text: "Y CALLE", width: 106, empty: true },
  { text: "25.444178907363554", width: 260, locked: true },
  { text: " -100.98043366590453", width: 282, locked: true },
];

const ownerFields: FieldData[] = [
  { text: "MONICA.RODRIGUEZ@EVOTEK.COM.MX", width: 521, locked: true },
  { text: "ROGM901001HJ7", width: 218, locked: true },
];

const menu: [string, number][] = [
  ["INICIO", 69],
  ["SOLICITUD LICENCIA", 223],
  ["SOLICITUD DE CAMBIO", 246],
  ["PERMISO PROVISIONAL", 251],
  ["REFRENDO", 119],
  ["VER TRÁMITES", 158],
  ["CONSULTA SOLICITUD", 239],
  ["SALIR", 62],
];

function Field({ text, width, locked, empty }: FieldData) {
  return (
    <FieldBox $locked={locked} $empty={empty}>
      <Measured text={text} width={width} />
    </FieldBox>
  );
}

export default function App() {
  return (
    <Window>
      <GlobalStyle />
      <Toolbar>
        <ButtonGroup>
          <ToolButton $width={51}>
            <svg width="16" height="26" viewBox="0 0 16 26" fill="none" stroke="#4d4d4d" strokeWidth="3" strokeLinecap="round">
              <path d="M13.5 2L3 13L13.5 24" />
            </svg>
          </ToolButton>
          <ToolButton $width={51}>
            <svg width="16" height="26" viewBox="0 0 16 26" fill="none" stroke="#acacac" strokeWidth="3" strokeLinecap="round">
              <path d="M2.5 2L13 13L2.5 24" />
            </svg>
          </ToolButton>
          <ToolButton $width={76} $apart>
            <svg width="30" height="24" viewBox="0 0 30 24" fill="none" stroke="#4d4d4d" strokeWidth="2">
              <rect x="1" y="1" width="28" height="22" rx="1.5" />
              <path d="M11 1V23" />
              <path d="M4 5H8M4 9H8M4 13H8" stroke="#8a8a8a" />
            </svg>
          </ToolButton>
        </ButtonGroup>
        <AddressBar>
          <Measured text="localhost" width={103} />
          <svg width="26" height="30" viewBox="0 0 26 30">
            <path d="M13 6A10.3 10.3 0 1 0 23.3 16.5" fill="none" stroke="#7b7b7b" strokeWidth="2" />
            <path d="M12 0L20.5 6L12 12Z" fill="#7b7b7b" />
          </svg>
        </AddressBar>
        <ButtonGroup $end>
          <ToolButton $width={75}>
            <svg width="28" height="28" viewBox="0 0 28 28">
              <circle cx="14" cy="14" r="14" fill="#4d4d4d" />
              <path d="M12 6h4v8h5l-7 9l-7-9h5z" fill="#fff" />
            </svg>
          </ToolButton>
          <ToolButton $width={75}>
            <svg width="24" height="32" viewBox="0 0 24 32" fill="none" stroke="#4d4d4d" strokeWidth="2">
              <path d="M8 11H3Q2 11 2 12V28Q2 29 3 29H21Q22 29 22 28V12Q22 11 21 11H16M12 20V1M6.5 7L12 1L17.5 7" />
            </svg>
          </ToolButton>
          <ToolButton $width={75}>
            <svg width="24" height="24" viewBox="0 0 24 24" fill="none" stroke="#4d4d4d" strokeWidth="2">
              <rect x="1" y="7" width="16" height="16" rx="1.5" />
              <path d="M7 4V2Q7 1 8 1H22Q23 1 23 2V16Q23 17 22 17H20" />
            </svg>
          </ToolButton>
        </ButtonGroup>
      </Toolbar>
      <TabStrip>
        <PinnedTab>
          <WindowsMark>
            <Square $color="#d16544" />
            <Square $color="#95b64e" />
            <Square $color="#5ea1e4" />
            <Square $color="#edbb58" />
          </WindowsMark>
        </PinnedTab>
        <ActiveTab>
          <Measured text="Alcoholes" width={103} />
        </ActiveTab>
        <NewTab>
          <svg width="22" height="22" viewBox="0 0 22 22" stroke="#4a4a4a" strokeWidth="2">
            <path d="M11 0V22M0 11H22" />
          </svg>
        </NewTab>
      </TabStrip>

      <Page>
        <Sidebar>
          <Brand />
          <User>
            <svg width="10" height="15" viewBox="0 0 10 15" fill="#4c4c4c">
              <circle cx="5" cy="4" r="4" />
              <path d="M0 13Q0 9 2.6 9.4Q5 10.6 7.4 9.4Q10 9 10 13Q5 15.5 0 13Z" />
            </svg>
            <Measured text="ROGM901001HJ7" width={169} />
          </User>
          <Menu>
            {menu.map(([text, width]) => (
              <MenuItem key={text}>
                <Measured text={text} width={width} />
              </MenuItem>
            ))}
          </Menu>
          <SideFooter>
            <Copyright>
              <Measured text="MUNICIPIO DE SALTILLO 2020" width={306} />
            </Copyright>
            <Social>
              <FaFacebookF size={27} />
              <FaTwitter size={25} />
              <FaInstagram size={30} />
              <FaLinkedin size={30} />
            </Social>
          </SideFooter>
        </Sidebar>
        <Main>
          <CutField />
          <Title>
            <Measured text="Ubicación Físical de Licencia" width={391} />
          </Title>
          <Split>
            <FieldColumn $width={887}>
              {locationFields.map((f) => (
                <Field key={f.text} {...f} />
              ))}
            </FieldColumn>
            <MapFrame>
              <StreetMap />
              <TypeSwitch>
                <TypeOption $active>
                  <Measured text="Mapa" width={76} />
                </TypeOption>
                <TypeOption>
                  <Measured text="Satélite" width={102} />
                </TypeOption>
              </TypeSwitch>
              <Control $top={17} $height={68}>
                <svg width="30" height="30" viewBox="0 0 30 30" fill="none" stroke="#666" strokeWidth="4">
                  <path d="M2 10V2H10M20 2H28V10M28 20V28H20M10 28H2V20" />
                </svg>
              </Control>
              <Control $top={600} $height={68}>
                <svg width="30" height="52" viewBox="0 0 30 52" stroke="#8d7a45" strokeWidth="1.2">
                  <path
                    d="M8.500 17H21.500Q24 17 25 20L28.500 34Q29 36 27 36.500L24 37L22 30L21.500 51H16L15 38L14 51H8L7.500 30L6 37L3 36.500Q1 36 1.500 34L5 20Q6 17 8.500 17Z"
                    fill="#f2bf4b"
                  />
                  <path d="M8 17.500H22L15 27Z" fill="#d5813c" stroke="none" />
                  <circle cx="15" cy="10" r="8.800" fill="#f2bf4b" />
                </svg>
              </Control>
              <Control $top={723} $height={137}>
                <ZoomHalf>
                  <svg width="30" height="30" viewBox="0 0 30 30" fill="#666">
                    <path d="M11.500 0h7v11.500H30v7H18.500V30h-7V18.500H0v-7h11.500z" />
                  </svg>
                </ZoomHalf>
                <ZoomHalf>
                  <svg width="30" height="8" viewBox="0 0 30 8" fill="#666">
                    <path d="M0 0h30v8H0z" />
                  </svg>
                </ZoomHalf>
              </Control>
              <Attribution>
                <Measured text="Datos de mapas ©2020 INEGI" width={239} />
                <Measured text="Términos de uso" width={133} />
                <Measured text="Notificar un problema de Maps" width={246} />
              </Attribution>
            </MapFrame>
          </Split>
          <FieldColumn $width={1826}>
            {ownerFields.map((f) => (
              <Field key={f.text} {...f} />
            ))}
          </FieldColumn>
          <Submit>
            <Measured text="GUARDAR SOLICITUD" width={229} />
          </Submit>
        </Main>
      </Page>
    </Window>
  );
}
